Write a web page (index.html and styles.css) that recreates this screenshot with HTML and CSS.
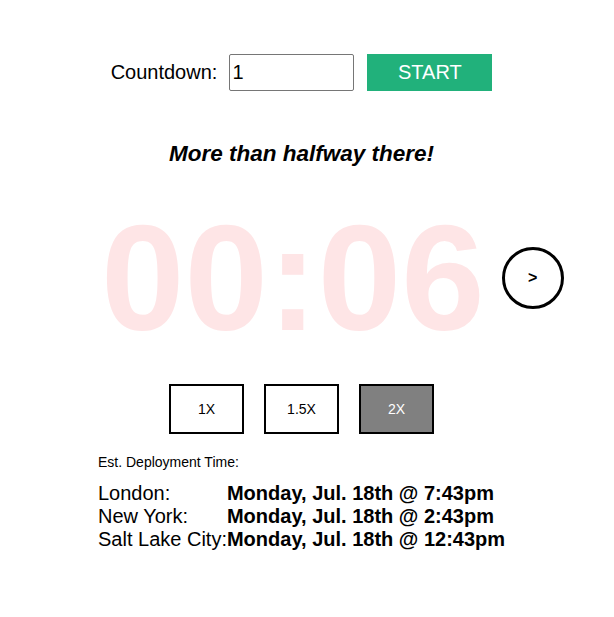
FILE: index.html
```html
<!DOCTYPE html>
<html>
<head>
<meta charset="utf-8">
<link rel="stylesheet" href="styles.css">
</head>
<body>
<div class="wrap">
  <div class="controls">
    <label class="label" for="cd">Countdown:</label>
    <input id="cd" class="input" type="text" value="1">
    <button class="start">START</button>
  </div>
  <h2 class="msg">More than halfway there!</h2>
  <div class="timer-row">
    <div class="timer">00:06</div>
    <button class="next">&gt;</button>
  </div>
  <div class="speeds">
    <button class="speed">1X</button>
    <button class="speed">1.5X</button>
    <button class="speed active">2X</button>
  </div>
  <div class="est">Est. Deployment Time:</div>
  <table class="times">
    <tr><td class="city">London:</td><td class="when">Monday, Jul. 18th @ 7:43pm</td></tr>
    <tr><td class="city">New York:</td><td class="when">Monday, Jul. 18th @ 2:43pm</td></tr>
    <tr><td class="city">Salt Lake City:</td><td class="when">Monday, Jul. 18th @ 12:43pm</td></tr>
  </table>
</div>
</body>
</html>
```
FILE: styles.css
```css
html, body {
  margin: 0;
  padding: 0;
  background: #fff;
}
body {
  padding-right: 11px;
  font-family: "Liberation Sans", Arial, sans-serif;
  color: #000;
}
.wrap {
  width: 407px;
  margin: 0 auto;
  padding-top: 54px;
}
.controls {
  display: flex;
  align-items: center;
  justify-content: center;
  height: 37px;
}
.label {
  font-size: 20px;
  margin-right: 12px;
}
.input {
  box-sizing: border-box;
  width: 125px;
  height: 37px;
  border: 1px solid #767676;
  border-radius: 2px;
  padding: 1px 2px;
  font-family: "Liberation Sans", Arial, sans-serif;
  font-size: 20px;
  margin: 0 13px 0 0;
}
.start {
  box-sizing: border-box;
  width: 125px;
  height: 37px;
  border: none;
  background: #21b17b;
  color: #fff;
  font-family: "Liberation Sans", Arial, sans-serif;
  font-size: 20px;
  padding: 0;
}
.msg {
  margin: 50px 0 0;
  text-align: center;
  font-size: 22.5px;
  font-weight: bold;
  font-style: italic;
  line-height: 25px;
}
.timer-row {
  display: flex;
  align-items: center;
  margin-top: 25px;
}
.timer {
  font-size: 150px;
  font-weight: bold;
  color: #fee5e6;
  line-height: 174px;
  padding-left: 3px;
  white-space: nowrap;
}
.next {
  flex: none;
  box-sizing: border-box;
  width: 62px;
  height: 62px;
  border: 3px solid #000;
  border-radius: 50%;
  background: #fff;
  margin-left: 17px;
  padding: 0;
  font-family: "Liberation Sans", Arial, sans-serif;
  font-size: 16px;
  font-weight: bold;
  color: #000;
}
.speeds {
  display: flex;
  justify-content: center;
  gap: 20px;
  margin-top: 19px;
}
.speed {
  box-sizing: border-box;
  width: 75px;
  height: 50px;
  border: 2px solid #000;
  background: #fff;
  color: #000;
  font-family: "Liberation Sans", Arial, sans-serif;
  font-size: 14px;
  padding: 0;
}
.speed.active {
  background: #808080;
  color: #fff;
}
.est {
  margin-top: 20px;
  font-size: 14px;
  line-height: 16px;
}
.times {
  margin-top: 12px;
  border-collapse: collapse;
  font-size: 20px;
}
.times td {
  padding: 0;
  line-height: 23px;
  white-space: nowrap;
}
.when {
  font-weight: bold;
}
```
